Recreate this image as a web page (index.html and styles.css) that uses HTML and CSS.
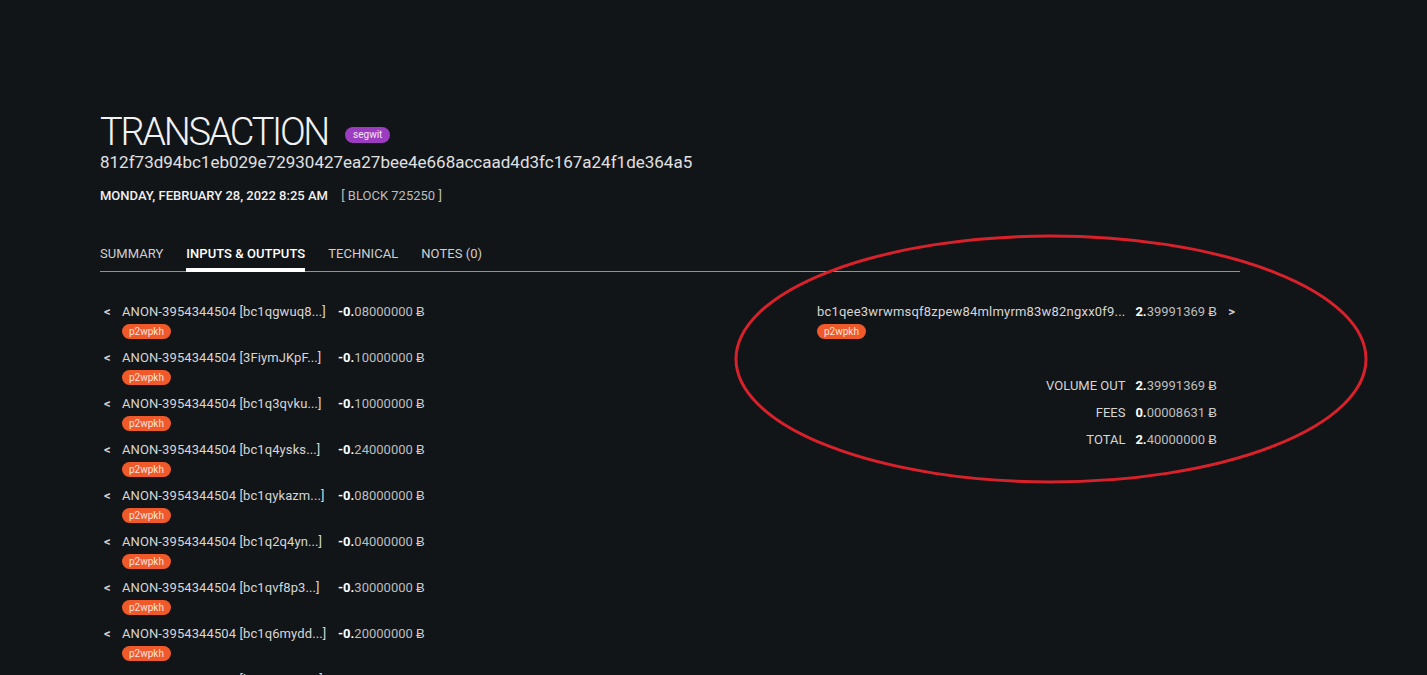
FILE: index.html
```html
<!DOCTYPE html>
<html>
<head>
  <title>Transaction</title>
  <link rel="stylesheet" href="styles.css">
</head>
<body>
<div class="page">
  <div class="tx-head">
    <h1 class="tx-title">TRANSACTION <span class="badge badge-segwit">segwit</span></h1>
    <div class="tx-hash">812f73d94bc1eb029e72930427ea27bee4e668accaad4d3fc167a24f1de364a5</div>
    <div class="tx-meta">
      <span class="tx-date">MONDAY, FEBRUARY 28, 2022 8:25 AM</span>
      <span class="tx-block">[ BLOCK 725250 ]</span>
    </div>
  </div>

  <div class="tabs">
    <span class="tab">SUMMARY</span>
    <span class="tab active">INPUTS &amp; OUTPUTS</span>
    <span class="tab">TECHNICAL</span>
    <span class="tab">NOTES (0)</span>
  </div>

  <div class="io">
    <div class="inputs">
      <div class="in-row">
        <span class="arrow">&lt;</span>
        <span class="label">ANON-3954344504 [bc1qgwuq8...]</span>
        <span class="amount"><b>-0.</b>08000000 <i>Ƀ</i></span>
        <span class="badge badge-type">p2wpkh</span>
      </div>
      <div class="in-row">
        <span class="arrow">&lt;</span>
        <span class="label">ANON-3954344504 [3FiymJKpF...]</span>
        <span class="amount"><b>-0.</b>10000000 <i>Ƀ</i></span>
        <span class="badge badge-type">p2wpkh</span>
      </div>
      <div class="in-row">
        <span class="arrow">&lt;</span>
        <span class="label">ANON-3954344504 [bc1q3qvku...]</span>
        <span class="amount"><b>-0.</b>10000000 <i>Ƀ</i></span>
        <span class="badge badge-type">p2wpkh</span>
      </div>
      <div class="in-row">
        <span class="arrow">&lt;</span>
        <span class="label">ANON-3954344504 [bc1q4ysks...]</span>
        <span class="amount"><b>-0.</b>24000000 <i>Ƀ</i></span>
        <span class="badge badge-type">p2wpkh</span>
      </div>
      <div class="in-row">
        <span class="arrow">&lt;</span>
        <span class="label">ANON-3954344504 [bc1qykazm...]</span>
        <span class="amount"><b>-0.</b>08000000 <i>Ƀ</i></span>
        <span class="badge badge-type">p2wpkh</span>
      </div>
      <div class="in-row">
        <span class="arrow">&lt;</span>
        <span class="label">ANON-3954344504 [bc1q2q4yn...]</span>
        <span class="amount"><b>-0.</b>04000000 <i>Ƀ</i></span>
        <span class="badge badge-type">p2wpkh</span>
      </div>
      <div class="in-row">
        <span class="arrow">&lt;</span>
        <span class="label">ANON-3954344504 [bc1qvf8p3...]</span>
        <span class="amount"><b>-0.</b>30000000 <i>Ƀ</i></span>
        <span class="badge badge-type">p2wpkh</span>
      </div>
      <div class="in-row">
        <span class="arrow">&lt;</span>
        <span class="label">ANON-3954344504 [bc1q6mydd...]</span>
        <span class="amount"><b>-0.</b>20000000 <i>Ƀ</i></span>
        <span class="badge badge-type">p2wpkh</span>
      </div>
      <div class="in-row">
        <span class="arrow">&lt;</span>
        <span class="label">ANON-3954344504 [bc1q8wtp2...]</span>
        <span class="amount"><b>-0.</b>12000000 <i>Ƀ</i></span>
        <span class="badge badge-type">p2wpkh</span>
      </div>
    </div>

    <div class="outputs">
      <div class="out-grid">
        <span class="label">bc1qee3wrwmsqf8zpew84mlmyrm83w82ngxx0f9...</span>
        <span class="amount"><b>2.</b>39991369 <i>Ƀ</i></span>
        <span class="arrow">&gt;</span>
        <span class="badge badge-type">p2wpkh</span>
      </div>
      <div class="totals">
        <span class="t-label">VOLUME OUT</span>
        <span class="amount"><b>2.</b>39991369 <i>Ƀ</i></span>
        <span class="t-label">FEES</span>
        <span class="amount"><b>0.</b>00008631 <i>Ƀ</i></span>
        <span class="t-label">TOTAL</span>
        <span class="amount"><b>2.</b>40000000 <i>Ƀ</i></span>
      </div>
    </div>
  </div>
</div>

<!-- annotation drawn over the screenshot -->
<svg class="markup" width="1427" height="675" viewBox="0 0 1427 675">
  <ellipse cx="1051" cy="359" rx="315" ry="123" fill="none" stroke="#d9212b" stroke-width="3"/>
</svg>
</body>
</html>
```

FILE: styles.css
```css
body {
    margin: 0;
    height: 675px;
    overflow: hidden;
    background-color: #121518;
    color: #d4d4d4;
    font-family: Roboto, "Liberation Sans", sans-serif;
}

.page {
    width: 1140px;
    margin-left: 100px;
    padding-top: 112px;
}

.tx-title {
    margin: 0;
    font-size: 38px;
    line-height: 40px;
    font-weight: 300;
    letter-spacing: -2.3px;
    color: #f2f2f2;
    display: flex;
    align-items: center;
}

.badge {
    display: inline-block;
    border-radius: 8px;
    font-size: 10px;
    line-height: 15px;
    height: 15px;
    font-weight: 400;
    letter-spacing: 0;
}

.badge-segwit {
    margin-left: 17px;
    padding: 0 8px;
    background-color: #9c3cc0;
    color: #f4e6f8;
    position: relative;
    top: 3px;
    height: 16px;
    line-height: 16px;
}

.badge-type {
    padding: 0 7px;
    background-color: #f0592a;
    color: #fde5dc;
}

.tx-hash {
    font-size: 17px;
    line-height: 20px;
    color: #e0e0e0;
}

.tx-meta {
    margin-top: 16px;
    font-size: 13px;
    line-height: 16px;
}

.tx-date {
    font-weight: 500;
    color: #f0f0f0;
}

.tx-block {
    margin-left: 10px;
    color: #bdbdbd;
}

.tabs {
    margin-top: 42px;
    display: flex;
    gap: 23px;
    border-bottom: 1px solid #8f9396;
}

.tab {
    font-size: 13px;
    line-height: 16px;
    letter-spacing: 0.05px;
    padding-bottom: 6px;
    border-bottom: 4px solid transparent;
    margin-bottom: -1px;
    color: #cfcfcf;
}

.tab.active {
    font-weight: 500;
    color: #fff;
    border-bottom-color: #fff;
}

.io {
    display: grid;
    grid-template-columns: 1fr 1fr;
    padding-top: 31px;
}

.inputs {
    display: flex;
    flex-direction: column;
    gap: 10px;
}

.in-row {
    display: grid;
    grid-template-columns: 22px 216px auto;
    row-gap: 3px;
    align-items: center;
    font-size: 13px;
    line-height: 18px;
}

.in-row .arrow {
    padding-left: 4px;
    font-weight: 700;
    color: #cfcfcf;
}

.in-row .badge-type {
    grid-column: 2;
    justify-self: start;
}

.label {
    color: #d6d6d6;
    white-space: nowrap;
    letter-spacing: 0.1px;
}

.amount {
    white-space: nowrap;
    color: #bdbdbd;
}

.amount b {
    font-weight: 700;
    color: #fff;
}

.amount i {
    font-style: normal;
    color: #d0d0d0;
}

.outputs {
    display: flex;
    flex-direction: column;
    align-items: flex-end;
    padding-right: 5px;
}

.out-grid {
    display: grid;
    grid-template-columns: auto auto 8px;
    column-gap: 10px;
    row-gap: 3px;
    align-items: center;
    font-size: 13px;
    line-height: 18px;
}

.out-grid .label {
    letter-spacing: 0.2px;
}

.out-grid .arrow {
    font-weight: 700;
    text-align: right;
    color: #cfcfcf;
}

.out-grid .badge-type {
    justify-self: start;
}

.totals {
    margin-top: 38px;
    margin-right: 18px;
    display: grid;
    grid-template-columns: auto auto;
    column-gap: 10px;
    row-gap: 9px;
    font-size: 13px;
    line-height: 18px;
}

.t-label {
    text-align: right;
    color: #d6d6d6;
}

.markup {
    position: absolute;
    top: 0;
    left: 0;
    pointer-events: none;
}
```
